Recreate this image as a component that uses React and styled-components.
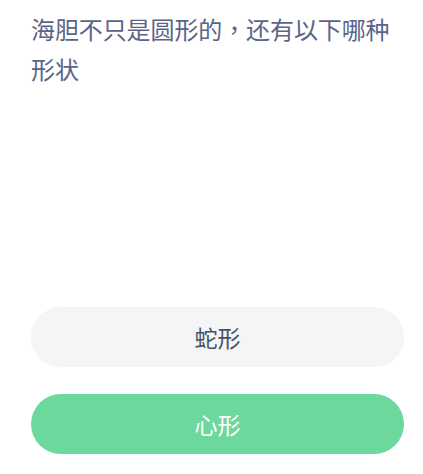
import React from 'react'
import styled, { createGlobalStyle } from 'styled-components'

const GlobalStyle = createGlobalStyle`
    * {
        box-sizing: border-box;
    }
    body {
        margin: 0;
        background: #ffffff;
        font-family: 'Noto Sans CJK SC', 'Noto Sans', sans-serif;
    }
`

const Page = styled.div`
    display: flex;
    flex-direction: column;
    width: 423px;
    height: 474px;
    padding: 9px 19px 0 31px;
    background: #ffffff;
`

// TC face gives the centred full-width comma of the original
const Question = styled.p`
    margin: 0;
    font-family: 'Noto Sans CJK TC', 'Noto Sans CJK SC', sans-serif;
    font-size: 24px;
    line-height: 40px;
    color: #5b6488;
    letter-spacing: -0.1px;
`

const OptionList = styled.div`
    display: flex;
    flex-direction: column;
    gap: 27px;
    margin-top: 218px;
`

const Option = styled.button`
    display: flex;
    align-items: center;
    justify-content: center;
    width: 373px;
    height: 60px;
    border: none;
    border-radius: 30px;
    padding: 0;
    font-family: inherit;
    font-size: 23px;
    font-weight: 400;
    cursor: pointer;
    background: ${props => (props.$correct ? '#6dd89e' : '#f4f5f7')};
    color: ${props => (props.$correct ? '#ffffff' : '#4a5066')};
`

const options = [
    { label: '蛇形', correct: false },
    { label: '心形', correct: true },
]

const App = () => {
  return (
    <>
      <GlobalStyle />
      <Page>
        <Question>海胆不只是圆形的，还有以下哪种形状</Question>
        <OptionList>
          {options.map(option => (
            <Option key={option.label} $correct={option.correct}>
              {option.label}
            </Option>
          ))}
        </OptionList>
      </Page>
    </>
  )
}

export default App
